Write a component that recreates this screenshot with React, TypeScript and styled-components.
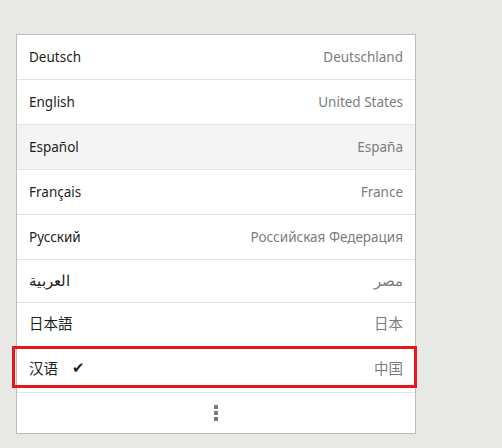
import React from 'react'
import styled, { createGlobalStyle } from 'styled-components'

const GlobalStyle = createGlobalStyle`
html, body {
  margin: 0;
  padding: 0;
  background: #e8e8e7;
  font-family: "Noto Sans", "Noto Sans CJK SC", sans-serif;
}
`

interface language {
  name: string,
  region: string,
  height?: number,
  size?: number,
  lift?: number,
  hover?: boolean,
  selected?: boolean
}

const languages: language[] = [
  { name: 'Deutsch', region: 'Deutschland' },
  { name: 'English', region: 'United States' },
  { name: 'Español', region: 'España', hover: true },
  { name: 'Français', region: 'France' },
  { name: 'Русский', region: 'Российская Федерация' },
  { name: 'العربية', region: 'مصر', height: 42, size: 15, lift: 3 },
  { name: '日本語', region: '日本', size: 14.5, lift: 5 },
  { name: '汉语', region: '中国', size: 14.5, lift: 5, selected: true },
]

const Page = styled.div`
width: 502px;
height: 448px;
padding: 34px 0 0 16px;
box-sizing: border-box;
`

const Panel = styled.div`
width: 400px;
height: 400px;
box-sizing: border-box;
background: #ffffff;
border: 1px solid #bdbdbb;
display: flex;
flex-direction: column;
`

const Row = styled.div<{ $height: number, $size: number, $lift: number, $hover?: boolean }>`
position: relative;
height: ${p => p.$height}px;
flex-shrink: 0;
box-sizing: border-box;
display: flex;
align-items: center;
justify-content: space-between;
padding: 0 12px ${p => p.$lift}px 12px;
font-size: ${p => p.$size}px;
border-bottom: 1px solid #e3e3e3;
background: ${p => p.$hover ? '#f4f4f4' : '#ffffff'};
`

const Name = styled.div`
display: flex;
align-items: center;
gap: 14px;
color: #1c1f20;
`

const Region = styled.div`
color: #7b7c7b;
`

const Check = styled.span`
font-size: 15px;
color: #1c1f20;
line-height: 1;
`

const Highlight = styled.div`
position: absolute;
top: -2px;
left: -5px;
right: -2px;
height: 42px;
border: 3px solid #e8161d;
box-sizing: border-box;
pointer-events: none;
`

const Footer = styled.div`
flex: 1;
display: flex;
align-items: center;
justify-content: center;
`

const Dots = styled.div`
display: flex;
flex-direction: column;
gap: 2px;
`

const Dot = styled.span`
width: 4px;
height: 4px;
background: #7a7a7a;
`

export default function App() {
  return (
    <Page>
      <GlobalStyle />
      <Panel>
        {languages.map(l => (
          <Row
            key={l.name}
            $height={(l.height ?? 44) + 1}
            $size={l.size ?? 13.5}
            $lift={l.lift ?? 0}
            $hover={l.hover}
          >
            <Name>
              <span>{l.name}</span>
              {l.selected && <Check>✔</Check>}
            </Name>
            <Region>{l.region}</Region>
            {l.selected && <Highlight />}
          </Row>
        ))}
        <Footer>
          <Dots>
            <Dot />
            <Dot />
            <Dot />
          </Dots>
        </Footer>
      </Panel>
    </Page>
  )
}
